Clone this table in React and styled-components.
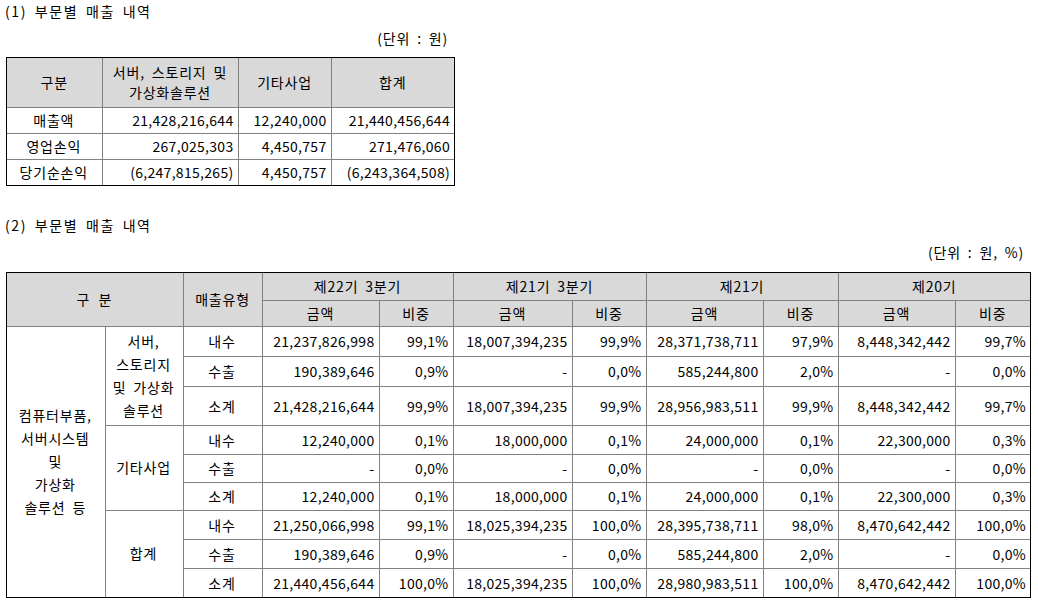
import React from "react";
import styled, { createGlobalStyle } from "styled-components";

const GlobalStyle = createGlobalStyle`
  body {
    margin: 0;
    background: #fff;
    color: #000;
    font-family: "Noto Sans CJK KR", "Noto Sans", sans-serif;
    font-size: 14px;
    letter-spacing: 0.3px;
    word-spacing: 3px;
  }
`;

const Page = styled.div`
  padding: 0 0 0 6px;
`;

const Title = styled.div`
  margin-top: ${(p) => p.top || 0}px;
  margin-left: -1px;
  line-height: 22px;
  letter-spacing: 1.6px;
`;

const Unit = styled.div`
  width: ${(p) => p.w}px;
  margin-top: 4px;
  padding-right: 6px;
  box-sizing: border-box;
  line-height: 24px;
  text-align: right;
  letter-spacing: 0.8px;
`;

const Frame = styled.div`
  width: ${(p) => p.w}px;
  margin-top: ${(p) => p.gap || 7}px;
  border: 1px solid #000;
`;

const Grid = styled.table`
  width: 100%;
  table-layout: fixed;
  border-collapse: collapse;
  border-style: hidden;
`;

const Row = styled.tr`
  height: ${(p) => p.h}px;
`;

const Head = styled.th`
  padding: 0 3px;
  font-weight: normal;
  background: #d9d9d9;
  border: 1px solid #808080;
  text-align: center;
  line-height: 20px;
  letter-spacing: ${(p) => p.spread || 0.8}px;
`;

const Cell = styled.td`
  padding: 0 4px 0 3px;
  border: 1px solid #808080;
  text-align: ${(p) => p.align || "right"};
  line-height: ${(p) => p.lh || 20}px;
  letter-spacing: ${(p) => (p.align === "center" ? 0.8 : 0.3)}px;
  white-space: nowrap;
`;

const summary = [
  ["매출액", "21,428,216,644", "12,240,000", "21,440,456,644"],
  ["영업손익", "267,025,303", "4,450,757", "271,476,060"],
  ["당기순손익", "(6,247,815,265)", "4,450,757", "(6,243,364,508)"],
];

const periods = ["제22기 3분기", "제21기 3분기", "제21기", "제20기"];

const groups = [
  {
    name: ["서버,", "스토리지", "및 가상화", "솔루션"],
    rows: [
      ["내수", "21,237,826,998", "99,1%", "18,007,394,235", "99,9%", "28,371,738,711", "97,9%", "8,448,342,442", "99,7%"],
      ["수출", "190,389,646", "0,9%", "-", "0,0%", "585,244,800", "2,0%", "-", "0,0%"],
      ["소계", "21,428,216,644", "99,9%", "18,007,394,235", "99,9%", "28,956,983,511", "99,9%", "8,448,342,442", "99,7%"],
    ],
    heights: [30, 30, 39],
  },
  {
    name: ["기타사업"],
    rows: [
      ["내수", "12,240,000", "0,1%", "18,000,000", "0,1%", "24,000,000", "0,1%", "22,300,000", "0,3%"],
      ["수출", "-", "0,0%", "-", "0,0%", "-", "0,0%", "-", "0,0%"],
      ["소계", "12,240,000", "0,1%", "18,000,000", "0,1%", "24,000,000", "0,1%", "22,300,000", "0,3%"],
    ],
    heights: [29, 28, 28],
  },
  {
    name: ["합계"],
    rows: [
      ["내수", "21,250,066,998", "99,1%", "18,025,394,235", "100,0%", "28,395,738,711", "98,0%", "8,470,642,442", "100,0%"],
      ["수출", "190,389,646", "0,9%", "-", "0,0%", "585,244,800", "2,0%", "-", "0,0%"],
      ["소계", "21,440,456,644", "100,0%", "18,025,394,235", "100,0%", "28,980,983,511", "100,0%", "8,470,642,442", "100,0%"],
    ],
    heights: [29, 29, 29],
  },
];

const lines = (arr) =>
  arr.map((t, i) => (
    <React.Fragment key={i}>
      {i > 0 && <br />}
      {t}
    </React.Fragment>
  ));

function App() {
  return (
    <Page>
      <GlobalStyle />
      <Title>(1) 부문별 매출 내역</Title>
      <Unit w={448}>(단위 : 원)</Unit>
      <Frame w={447}>
        <Grid>
          <colgroup>
            <col style={{ width: 95 }} />
            <col style={{ width: 136 }} />
            <col style={{ width: 93 }} />
            <col style={{ width: 123 }} />
          </colgroup>
          <thead>
            <Row h={49}>
              <Head>구분</Head>
              <Head>
                서버, 스토리지 및<br />
                가상화솔루션
              </Head>
              <Head>기타사업</Head>
              <Head>합계</Head>
            </Row>
          </thead>
          <tbody>
            {summary.map((r) => (
              <Row h={26} key={r[0]}>
                <Cell align="center">{r[0]}</Cell>
                <Cell>{r[1]}</Cell>
                <Cell>{r[2]}</Cell>
                <Cell>{r[3]}</Cell>
              </Row>
            ))}
          </tbody>
        </Grid>
      </Frame>

      <Title top={28}>(2) 부문별 매출 내역</Title>
      <Unit w={1024}>(단위 : 원, %)</Unit>
      <Frame w={1023} gap={8}>
        <Grid>
          <colgroup>
            {[98, 78, 79, 117, 74, 119, 74, 117, 75, 117, 75].map((w, i) => (
              <col key={i} style={{ width: w }} />
            ))}
          </colgroup>
          <thead>
            <Row h={27}>
              <Head rowSpan={2} colSpan={2} spread={1.5}>
                구 분
              </Head>
              <Head rowSpan={2}>매출유형</Head>
              {periods.map((p) => (
                <Head colSpan={2} key={p}>
                  {p}
                </Head>
              ))}
            </Row>
            <Row h={26}>
              {periods.map((p) => (
                <React.Fragment key={p}>
                  <Head>금액</Head>
                  <Head>비중</Head>
                </React.Fragment>
              ))}
            </Row>
          </thead>
          <tbody>
            {groups.map((g, gi) =>
              g.rows.map((r, ri) => (
                <Row h={g.heights[ri]} key={`${gi}-${ri}`}>
                  {gi === 0 && ri === 0 && (
                    <Cell rowSpan={9} align="center" lh={23}>
                      {lines(["컴퓨터부품,", "서버시스템", "및", "가상화", "솔루션 등"])}
                    </Cell>
                  )}
                  {ri === 0 && (
                    <Cell rowSpan={3} align="center" lh={23}>
                      {lines(g.name)}
                    </Cell>
                  )}
                  <Cell align="center">{r[0]}</Cell>
                  {r.slice(1).map((v, vi) => (
                    <Cell key={vi}>{v}</Cell>
                  ))}
                </Row>
              ))
            )}
          </tbody>
        </Grid>
      </Frame>
    </Page>
  );
}

export default App;
